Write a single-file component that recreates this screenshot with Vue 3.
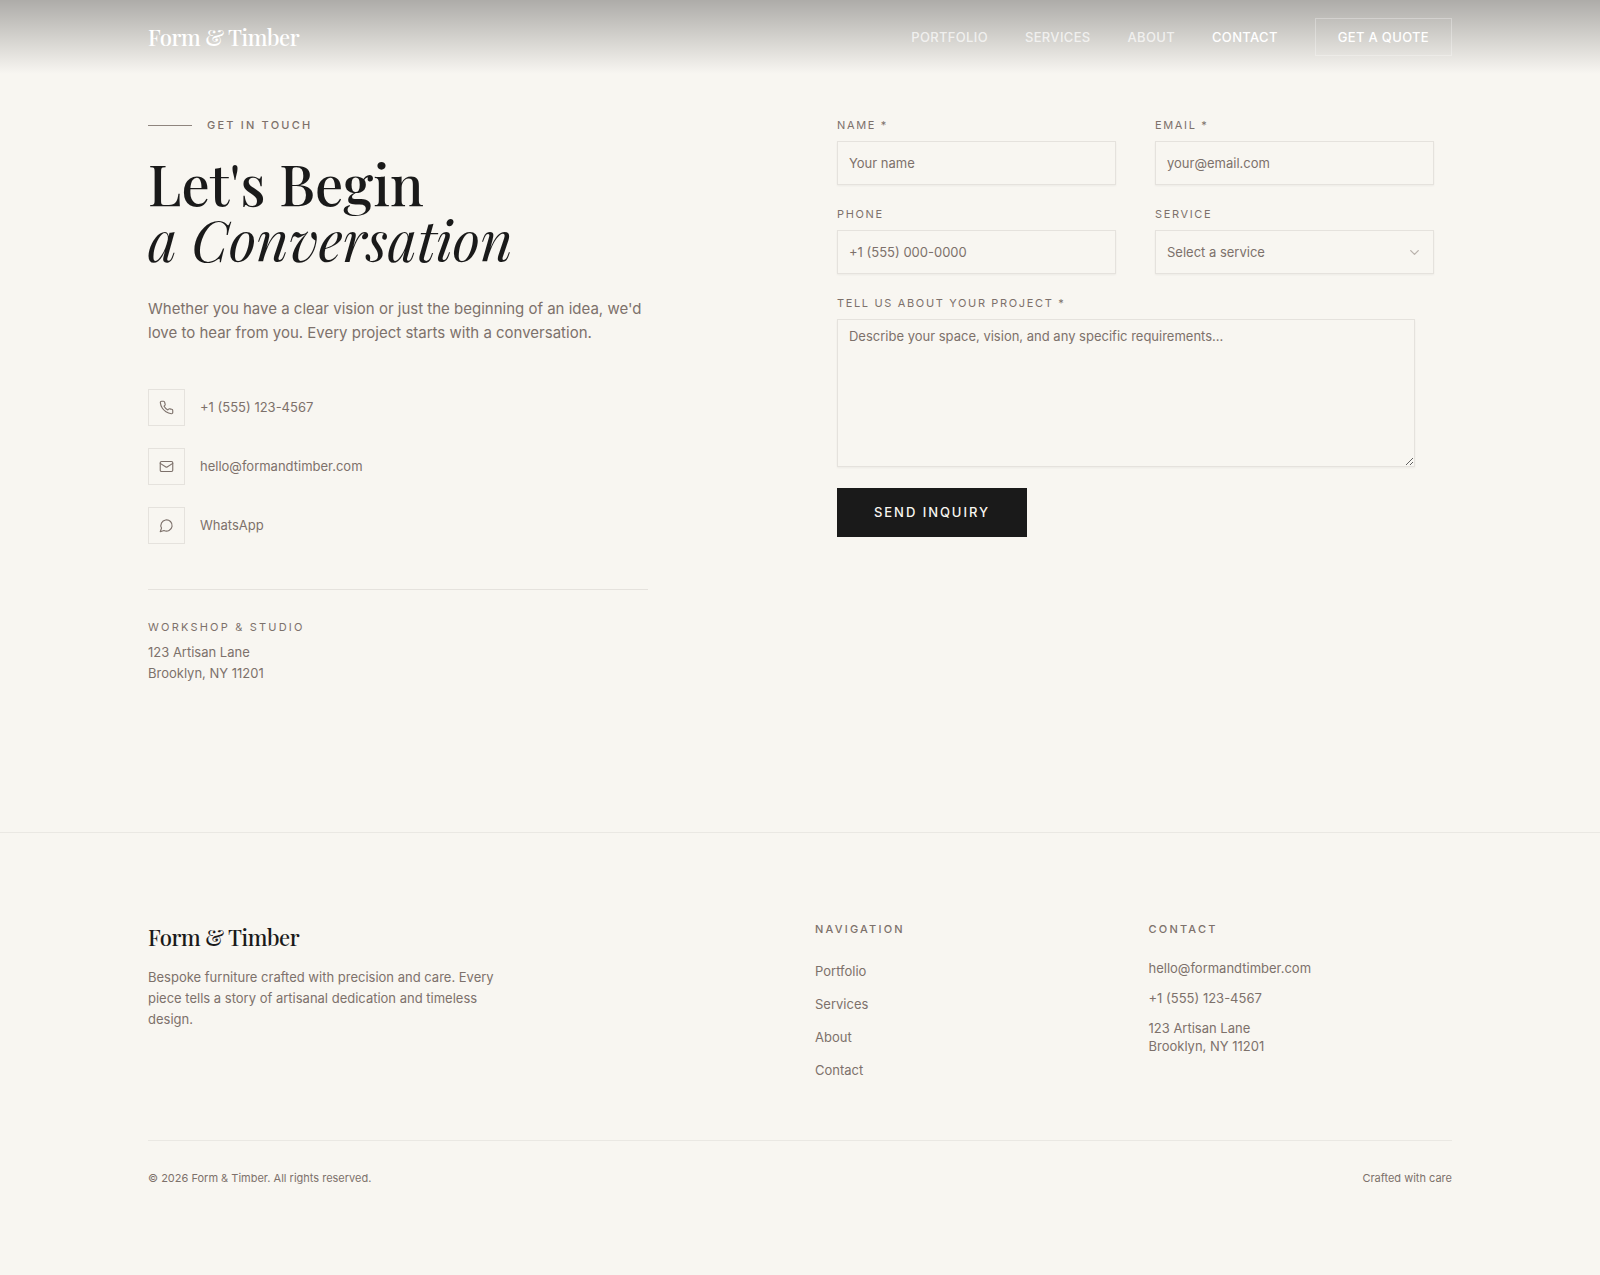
<script setup>
import { reactive } from 'vue'

const navLinks = ['Portfolio', 'Services', 'About', 'Contact']
const services = ['Custom Furniture', 'Interior Design', 'Restoration']
const form = reactive({ name: '', email: '', phone: '', service: '', message: '' })
</script>

<template>
  <div class="page">
    <header class="site-header">
      <div class="container header-row">
        <a class="logo" href="#">Form &amp; Timber</a>
        <nav class="main-nav" aria-label="Main">
          <a
            v-for="item in navLinks"
            :key="item"
            :href="'#' + item.toLowerCase()"
            :class="{ active: item === 'Contact' }"
          >{{ item }}</a>
          <a class="quote" href="#quote">Get a Quote</a>
        </nav>
      </div>
    </header>

    <main class="container contact-grid">
      <section class="intro">
        <p class="eyebrow">Get in Touch</p>
        <h1>Let's Begin<br /><em>a Conversation</em></h1>
        <p class="lead">Whether you have a clear vision or just the beginning of an idea, we'd love to hear from you. Every project starts with a conversation.</p>

        <ul class="channels">
          <li>
            <a href="tel:+15551234567">
              <span class="icon-box">
                <svg viewBox="0 0 24 24" aria-hidden="true"><path d="M22 16.92v3a2 2 0 0 1-2.18 2 19.79 19.79 0 0 1-8.63-3.07 19.5 19.5 0 0 1-6-6 19.79 19.79 0 0 1-3.07-8.67A2 2 0 0 1 4.11 2h3a2 2 0 0 1 2 1.72 12.84 12.84 0 0 0 .7 2.81 2 2 0 0 1-.45 2.11L8.09 9.91a16 16 0 0 0 6 6l1.27-1.27a2 2 0 0 1 2.11-.45 12.84 12.84 0 0 0 2.81.7A2 2 0 0 1 22 16.92z" /></svg>
              </span>
              +1 (555) 123-4567
            </a>
          </li>
          <li>
            <a href="mailto:hello@formandtimber.com">
              <span class="icon-box">
                <svg viewBox="0 0 24 24" aria-hidden="true"><rect width="20" height="16" x="2" y="4" rx="2" /><path d="m22 7-8.97 5.7a1.94 1.94 0 0 1-2.06 0L2 7" /></svg>
              </span>
              hello@formandtimber.com
            </a>
          </li>
          <li>
            <a href="#whatsapp">
              <span class="icon-box">
                <svg viewBox="0 0 24 24" aria-hidden="true"><path d="M7.9 20A9 9 0 1 0 4 16.1L2 22Z" /></svg>
              </span>
              WhatsApp
            </a>
          </li>
        </ul>

        <address class="studio">
          <span class="studio-title">Workshop &amp; Studio</span>
          123 Artisan Lane<br />Brooklyn, NY 11201
        </address>
      </section>

      <form class="inquiry" @submit.prevent>
        <div class="field">
          <label for="name">Name *</label>
          <input id="name" v-model="form.name" type="text" placeholder="Your name" required />
        </div>
        <div class="field">
          <label for="email">Email *</label>
          <input id="email" v-model="form.email" type="email" placeholder="your@email.com" required />
        </div>
        <div class="field">
          <label for="phone">Phone</label>
          <input id="phone" v-model="form.phone" type="tel" placeholder="+1 (555) 000-0000" />
        </div>
        <div class="field">
          <label for="service">Service</label>
          <div class="select-wrap">
            <select id="service" v-model="form.service">
              <option value="">Select a service</option>
              <option v-for="s in services" :key="s" :value="s">{{ s }}</option>
            </select>
            <svg class="chevron" viewBox="0 0 24 24" aria-hidden="true"><path d="m6 9 6 6 6-6" /></svg>
          </div>
        </div>
        <div class="field message">
          <label for="message">Tell us about your project *</label>
          <textarea id="message" v-model="form.message" placeholder="Describe your space, vision, and any specific requirements..." required></textarea>
        </div>
        <button class="send" type="submit">Send Inquiry</button>
      </form>
    </main>

    <footer class="site-footer">
      <div class="container">
        <div class="footer-grid">
          <div class="brand">
            <a class="logo" href="#">Form &amp; Timber</a>
            <p>Bespoke furniture crafted with precision and care. Every piece tells a story of artisanal dedication and timeless design.</p>
          </div>
          <nav aria-label="Footer">
            <h2>Navigation</h2>
            <ul class="footer-links">
              <li v-for="item in navLinks" :key="item"><a :href="'#' + item.toLowerCase()">{{ item }}</a></li>
            </ul>
          </nav>
          <div>
            <h2>Contact</h2>
            <ul class="footer-contact">
              <li><a href="mailto:hello@formandtimber.com">hello@formandtimber.com</a></li>
              <li><a href="tel:+15551234567">+1 (555) 123-4567</a></li>
              <li>123 Artisan Lane<br />Brooklyn, NY 11201</li>
            </ul>
          </div>
        </div>
        <div class="legal">
          <p>© 2026 Form &amp; Timber. All rights reserved.</p>
          <p>Crafted with care</p>
        </div>
      </div>
    </footer>
  </div>
</template>

<style>
body {
  margin: 0;
  background: #f8f6f1;
}
</style>

<style scoped>
.page {
  --ink: #1a1a1a;
  --muted: #7d716b;
  --line: #e5e2dd;
  min-height: 100vh;
  background: #f8f6f1;
  color: var(--muted);
  font: 400 13px/21px Inter, "Liberation Sans", sans-serif;
}
.page *,
.page *::before {
  box-sizing: border-box;
}
h1, h2, p, ul {
  margin: 0;
  padding: 0;
}
ul {
  list-style: none;
}
a {
  color: inherit;
  text-decoration: none;
}
.container {
  max-width: 1400px;
  margin: 0 auto;
  padding: 0 48px;
}
.logo {
  color: var(--ink);
  font: 500 22px/32px "Playfair Display", "Liberation Serif", serif;
  letter-spacing: -0.02em;
}

/* Header */
.site-header {
  background: linear-gradient(to bottom, rgba(0, 0, 0, 0.3), transparent);
}
.header-row {
  display: flex;
  align-items: center;
  justify-content: space-between;
  padding-top: 18px;
  padding-bottom: 18px;
}
.site-header .logo {
  color: #fff;
}
.main-nav {
  display: flex;
  align-items: center;
  gap: 37px;
  color: rgba(255, 255, 255, 0.7);
  font-weight: 500;
  line-height: 20px;
  letter-spacing: 0.025em;
  text-transform: uppercase;
}
.main-nav .active,
.main-nav .quote {
  color: #fff;
}
.main-nav .quote {
  padding: 8px 22px;
  border: 1px solid rgba(255, 255, 255, 0.3);
}

/* Contact */
.contact-grid {
  display: grid;
  grid-template-columns: repeat(12, minmax(0, 1fr));
  column-gap: 74px;
  padding-top: 43px;
  padding-bottom: 148px;
}
.intro {
  grid-column: 1 / span 5;
}
.eyebrow {
  display: flex;
  align-items: center;
  gap: 15px;
  font-size: 11px;
  line-height: 16px;
  font-weight: 500;
  letter-spacing: 0.2em;
  text-transform: uppercase;
}
.eyebrow::before {
  content: "";
  width: 44px;
  height: 1px;
  background: #8f857e;
}
h1 {
  margin-top: 22px;
  color: var(--ink);
  font: 500 56px/56px "Playfair Display", "Liberation Serif", serif;
}
h1 em {
  font-weight: 400;
}
.lead {
  margin-top: 30px;
  font-size: 15px;
  line-height: 24px;
}
.channels {
  display: grid;
  gap: 22px;
  margin-top: 44px;
}
.channels a {
  display: flex;
  align-items: center;
  gap: 15px;
}
.icon-box {
  display: grid;
  place-items: center;
  width: 37px;
  height: 37px;
  border: 1px solid var(--line);
}
svg {
  width: 15px;
  height: 15px;
  fill: none;
  stroke: currentColor;
  stroke-width: 1.8;
  stroke-linecap: round;
  stroke-linejoin: round;
}
.studio {
  margin-top: 45px;
  padding-top: 29px;
  border-top: 1px solid var(--line);
  font-style: normal;
}
.studio-title {
  display: block;
  margin-bottom: 7px;
  font-size: 11px;
  line-height: 16px;
  letter-spacing: 0.2em;
  text-transform: uppercase;
}
.inquiry {
  grid-column: 7 / span 6;
  display: grid;
  grid-template-columns: repeat(2, minmax(0, 1fr));
  gap: 21px 39px;
  align-content: start;
  justify-items: start;
  padding-right: 18px;
}
.field {
  display: grid;
  gap: 8px;
  width: 100%;
}
.field label {
  font-size: 11px;
  line-height: 16px;
  letter-spacing: 0.15em;
  text-transform: uppercase;
}
.message {
  grid-column: 1 / -1;
  padding-right: 19px;
}
input, select, textarea {
  display: block;
  width: 100%;
  height: 44px;
  margin: 0;
  padding: 0 11px;
  border: 1px solid var(--line);
  border-radius: 0;
  background: transparent;
  box-shadow: 0 1px 2px rgba(0, 0, 0, 0.05);
  color: var(--muted);
  font: inherit;
  appearance: none;
}
textarea {
  height: 148px;
  padding-top: 6px;
  resize: vertical;
}
::placeholder {
  color: var(--muted);
  opacity: 1;
}
.select-wrap {
  position: relative;
}
.chevron {
  position: absolute;
  top: 15px;
  right: 12px;
  opacity: 0.5;
  stroke-width: 2;
  pointer-events: none;
}
.send {
  padding: 14px 37px;
  border: 0;
  background: var(--ink);
  color: #f8f6f1;
  font: inherit;
  font-weight: 500;
  letter-spacing: 0.15em;
  text-transform: uppercase;
}

/* Footer */
.site-footer {
  border-top: 1px solid #eae8e3;
  padding: 88px 0;
}
.footer-grid {
  display: grid;
  grid-template-columns: repeat(4, minmax(0, 1fr));
  column-gap: 30px;
}
.brand {
  grid-column: span 2;
}
.brand .logo {
  display: block;
}
.brand p {
  max-width: 353px;
  margin-top: 14px;
}
h2 {
  font-size: 11px;
  line-height: 16px;
  font-weight: 500;
  letter-spacing: 0.2em;
  text-transform: uppercase;
}
.footer-links {
  display: grid;
  gap: 12px;
  margin-top: 24px;
}
.footer-contact {
  display: grid;
  gap: 12px;
  margin-top: 22px;
  line-height: 18px;
}
.legal {
  display: flex;
  justify-content: space-between;
  margin-top: 59px;
  padding-top: 29px;
  border-top: 1px solid #eae8e3;
  font-size: 11px;
  line-height: 16px;
}
</style>
